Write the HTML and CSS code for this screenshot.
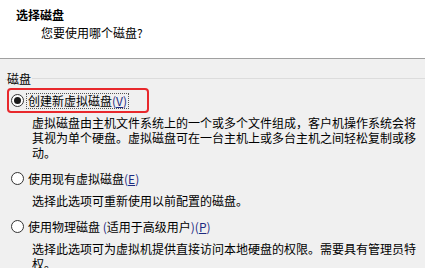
FILE: index.html
```html
<!DOCTYPE html>
<html lang="zh-CN">
<head>
<meta charset="utf-8">
<title>选择磁盘</title>
<link rel="stylesheet" href="styles.css">
</head>
<body>
<header class="header">
  <div class="title">选择磁盘</div>
  <div class="subtitle">您要使用哪个磁盘?</div>
</header>
<main class="content">
  <div class="group-head">
    <span class="group-tick"></span>
    <span class="group-label">磁盘</span>
    <span class="group-line"></span>
  </div>
  <div class="options">
    <div class="opt-row hl">
      <span class="radio checked"></span>
      <span class="opt-label focus">创建新虚拟磁盘<span class="key">(<u>V</u>)</span></span>
    </div>
    <p class="desc">虚拟磁盘由主机文件系统上的一个或多个文件组成，客户机操作系统会将其视为单个硬盘。虚拟磁盘可在一台主机上或多台主机之间轻松复制或移动。</p>

    <div class="opt-row">
      <span class="radio"></span>
      <span class="opt-label">使用现有虚拟磁盘<span class="key">(<u>E</u>)</span></span>
    </div>
    <p class="desc">选择此选项可重新使用以前配置的磁盘。</p>

    <div class="opt-row">
      <span class="radio"></span>
      <span class="opt-label">使用物理磁盘 <span class="key">(</span>适用于高级用户<span class="key">)(<u>P</u>)</span></span>
    </div>
    <p class="desc">选择此选项可为虚拟机提供直接访问本地硬盘的权限。需要具有管理员特权。</p>
  </div>
</main>
</body>
</html>
```

FILE: styles.css
```css
html, body {
  margin: 0;
  padding: 0;
}
body {
  width: 425px;
  height: 268px;
  overflow: hidden;
  background: #f0f0f0;
  color: #000;
  font-family: "Noto Sans CJK SC", "Noto Sans", "Liberation Sans", sans-serif;
  font-size: 12px;
}
.header {
  height: 58px;
  background: #fff;
  border-bottom: 1px solid #a0a0a0;
  box-sizing: border-box;
  padding: 7px 0 0 16px;
  height: 59px;
}
.title {
  font-weight: bold;
  line-height: 16px;
}
.subtitle {
  margin-top: 2px;
  padding-left: 25px;
  line-height: 16px;
}
.content {
  padding-top: 12px;
}
.group-head {
  display: flex;
  align-items: center;
  height: 16px;
  line-height: 16px;
}
.group-tick {
  width: 2px;
  margin-left: 5px;
  border-top: 1px solid #dcdcdc;
}
.group-label {
  padding: 0 1px 0 0;
}
.group-line {
  flex: 1;
  border-top: 1px solid #dcdcdc;
  margin-top: -1px;
}
.options {
  padding-left: 7px;
}
.opt-row {
  display: flex;
  align-items: center;
  height: 25px;
  box-sizing: border-box;
  border: 2px solid transparent;
  border-radius: 4px;
  padding-left: 2px;
  margin-top: 6px;
  width: 142px;
  white-space: nowrap;
}
.opt-row.hl {
  border-color: #e8282c;
  margin-top: 1px;
}
.radio {
  width: 13px;
  height: 13px;
  box-sizing: border-box;
  border: 1px solid #333;
  border-radius: 50%;
  background: #fff;
  display: flex;
  align-items: center;
  justify-content: center;
  flex: none;
}
.radio.checked::after {
  content: "";
  width: 7px;
  height: 7px;
  border-radius: 50%;
  background: #1a1a1a;
}
.opt-label {
  margin-left: 2px;
  padding: 0 1px;
  line-height: 14px;
  border: 1px dotted transparent;
}
.opt-label.focus {
  border-color: #555;
}
.key {
  color: #1c2a80;
}
.key u {
  text-decoration-thickness: 1px;
  text-underline-offset: 1px;
}
.desc {
  margin: 2px 0 0 25px;
  width: 386px;
  line-height: 15px;
}
```
